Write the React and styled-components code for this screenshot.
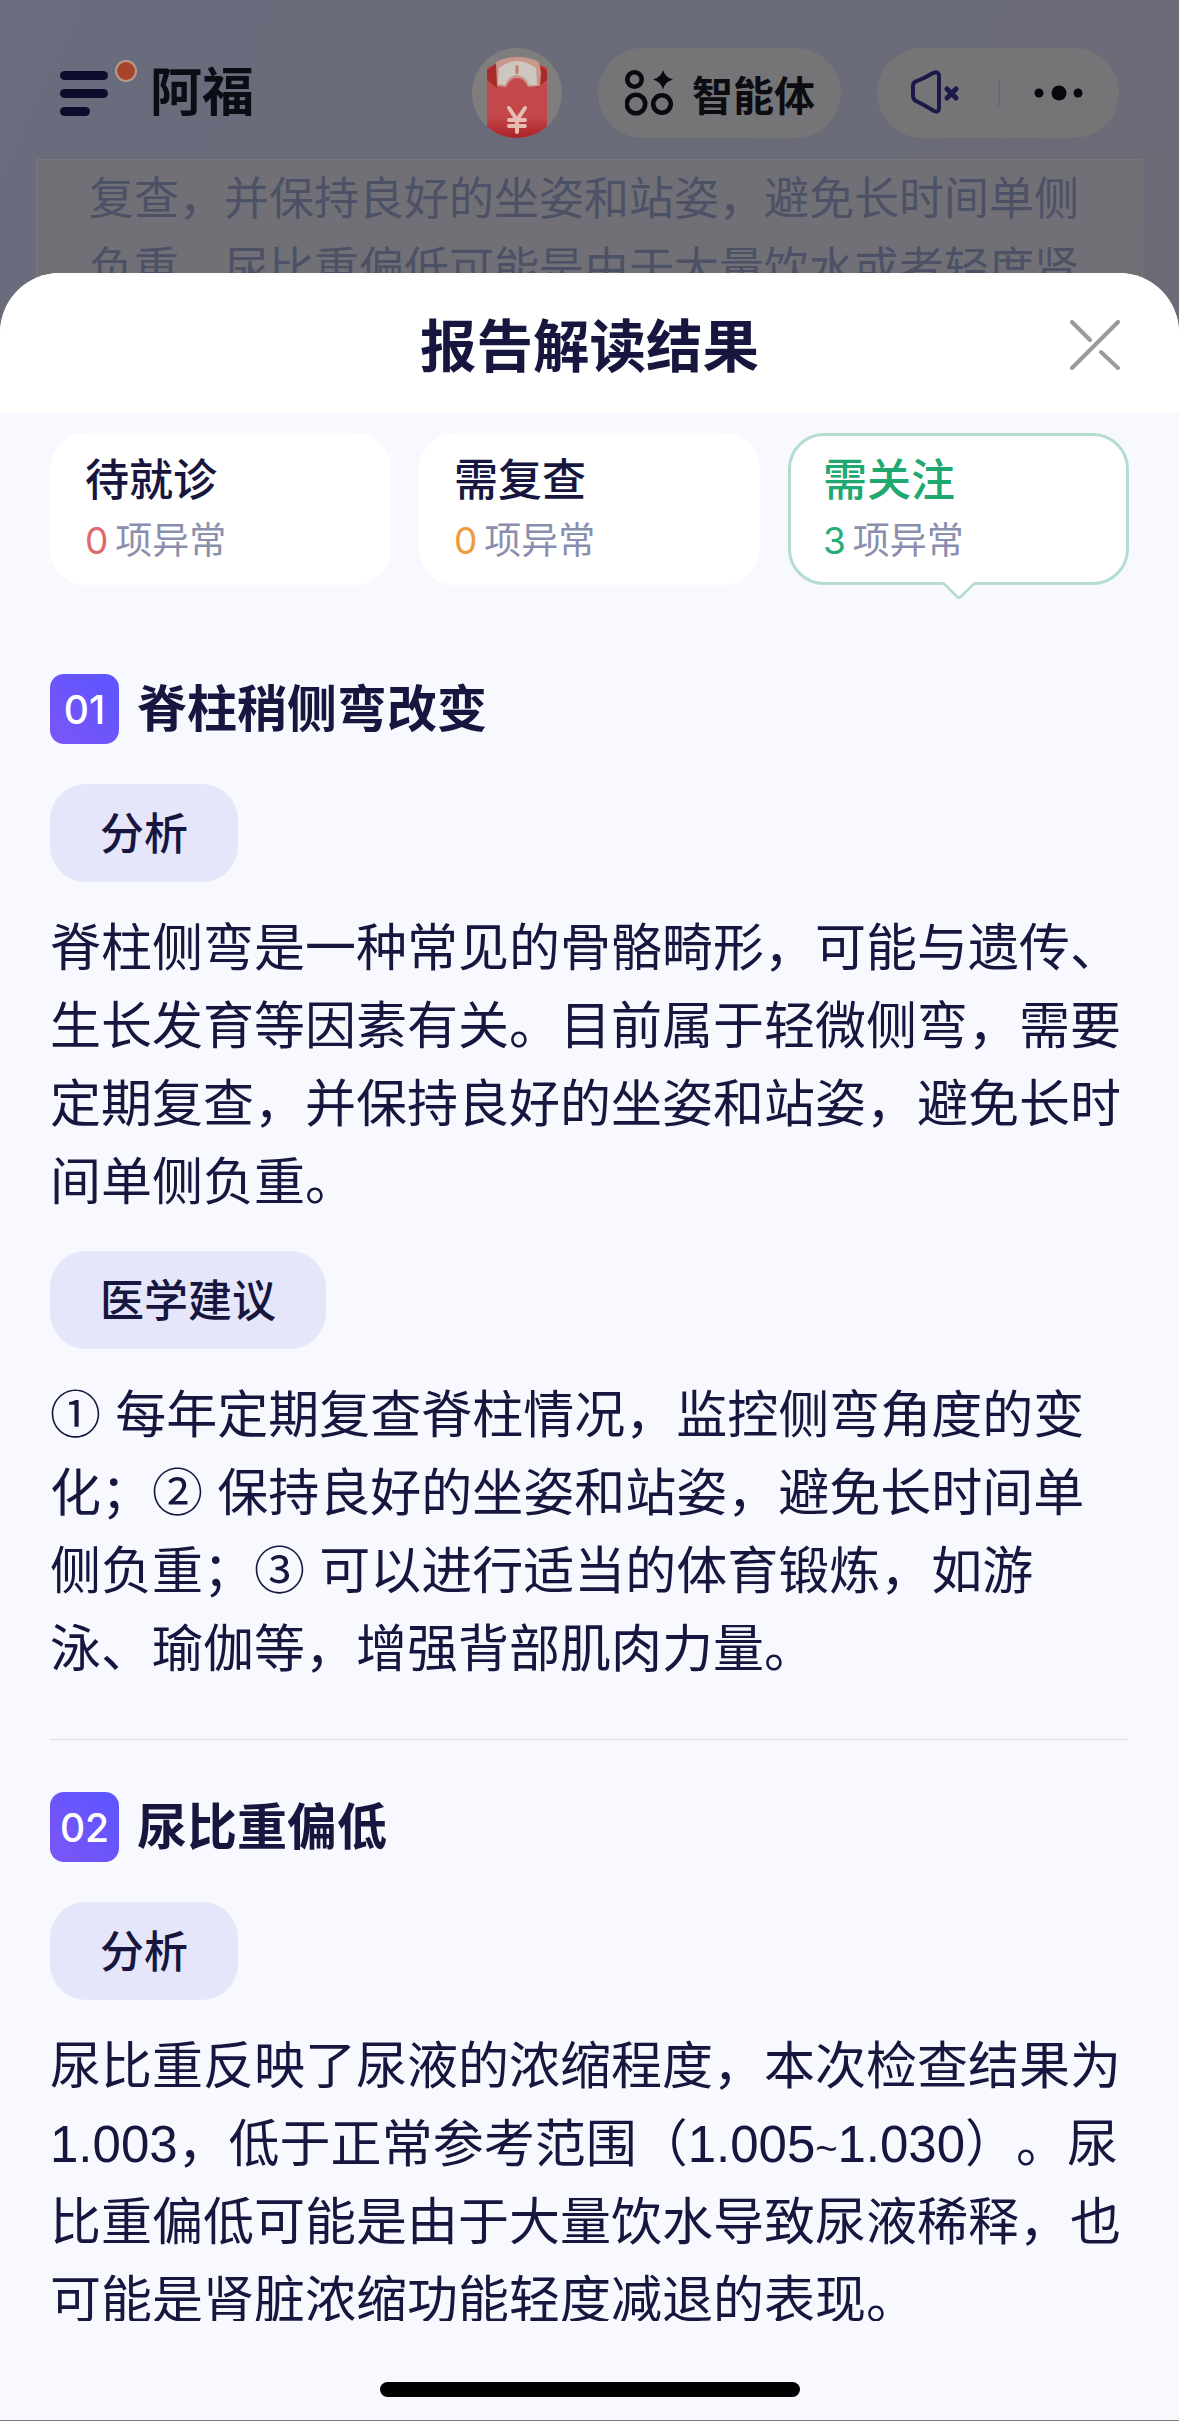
import React from 'react';
import styled, { createGlobalStyle } from 'styled-components';

const Global = createGlobalStyle`
  html, body { margin: 0; padding: 0; }
  body {
    background: #f8f9ff;
    font-family: Inter, "Noto Sans CJK SC", "Noto Sans", sans-serif;
  }
`;

const Page = styled.div`
  position: relative;
  width: 1179px;
  height: 2421px;
  overflow: hidden;
  background: linear-gradient(115deg, #686c7c 0%, #6b6b78 45%, #72696e 100%);
`;

const TopBar = styled.div`
  display: flex;
  align-items: center;
  justify-content: space-between;
  padding: 48px 60px 0;
`;

const Brand = styled.div`
  display: flex;
  align-items: center;
  gap: 12px;
`;

const BrandName = styled.span`
  font-size: 52px;
  font-weight: 700;
  line-height: 90px;
  color: #0c0c14;
`;

const TopActions = styled.div`
  display: flex;
  align-items: center;
  gap: 36px;
`;

const Avatar = styled.div`
  width: 90px;
  height: 90px;
  border-radius: 50%;
  overflow: hidden;
  background: #7f7e7c;
`;

const GhostPill = styled.div`
  display: flex;
  align-items: center;
  height: 90px;
  width: ${p => p.$width}px;
  box-sizing: border-box;
  padding-left: ${p => p.$inset}px;
  gap: ${p => p.$gap}px;
  border-radius: 45px;
  background: #757577;
`;

const AgentLabel = styled.span`
  font-size: 41px;
  font-weight: 600;
  color: #0c0c12;
`;

const PillDivider = styled.span`
  width: 2px;
  height: 26px;
  margin: 0 34px 0 37px;
  background: #68687a;
`;

const BehindCard = styled.div`
  margin: 21px 36px 0 36px;
  padding: 4px 52px 0;
  border: 1px solid #77777c;
  background: #707076;
  color: #4c5166;
  font-size: 45px;
  line-height: 70px;
  white-space: nowrap;
`;

const Sheet = styled.div`
  position: absolute;
  top: 273px;
  left: 0;
  right: 0;
  bottom: 0;
  display: flex;
  flex-direction: column;
  background: #f8f9ff;
  border-radius: 60px 60px 0 0;
  overflow: hidden;
  border-bottom: 1px solid #7c7c7c;
`;

const SheetHead = styled.div`
  display: flex;
  align-items: center;
  justify-content: center;
  position: relative;
  height: 140px;
  flex: none;
  background: #fff;
`;

const SheetTitle = styled.h1`
  margin: 0;
  padding-bottom: 3px;
  font-size: 56.5px;
  font-weight: 600;
  color: #16163f;
`;

const CloseButton = styled.button`
  position: absolute;
  top: 47px;
  right: 59px;
  width: 50px;
  height: 50px;
  padding: 0;
  border: 0;
  background: transparent;
`;

const Scroll = styled.div`
  height: 1908px;
  flex: none;
  overflow: hidden;
  padding: 20px 50px 0;
  box-sizing: border-box;
`;

const Tabs = styled.div`
  display: grid;
  grid-template-columns: repeat(3, 1fr);
  gap: 28px;
`;

const Tab = styled.div`
  position: relative;
  display: flex;
  flex-direction: column;
  justify-content: center;
  gap: 4px;
  height: 152px;
  box-sizing: border-box;
  padding: 0 32px;
  border: 3px solid ${p => (p.$active ? '#b5dcd0' : '#fff')};
  border-radius: 36px;
  background: #fff;

  ${p => p.$active && `
    &::after {
      content: '';
      position: absolute;
      left: 50%;
      bottom: -14px;
      width: 24px;
      height: 24px;
      margin-left: -12px;
      box-sizing: border-box;
      background: #fff;
      border-right: 3px solid #b5dcd0;
      border-bottom: 3px solid #b5dcd0;
      border-bottom-right-radius: 5px;
      transform: rotate(45deg);
    }
  `}
`;

const TabName = styled.div`
  font-size: 44px;
  font-weight: 500;
  line-height: 60px;
  color: ${p => p.$color};
`;

const TabCount = styled.div`
  font-size: 37px;
  line-height: 54px;
  color: #8a8fae;

  b {
    margin-right: 7px;
    font-weight: 400;
    color: ${p => p.$color};
  }
`;

const Section = styled.section`
  margin-top: ${p => (p.$first ? 89 : 0)}px;
`;

const SectionHead = styled.div`
  display: flex;
  align-items: center;
  gap: 18px;
  height: 70px;
  margin-bottom: 40px;
`;

const NumberBadge = styled.span`
  display: flex;
  align-items: center;
  justify-content: center;
  width: 69px;
  height: 70px;
  border-radius: 14px;
  background: linear-gradient(45deg, #7d55f8 0%, #5a55ff 100%);
  color: #fff;
  font-size: 39px;
  font-weight: 500;
`;

const SectionTitle = styled.h2`
  margin: 0;
  font-size: 50px;
  font-weight: 600;
  line-height: 70px;
  color: #16163f;
`;

const Label = styled.div`
  display: flex;
  align-items: center;
  width: fit-content;
  height: 98px;
  box-sizing: border-box;
  padding: 0 50px 4px;
  border-radius: 36px;
  background: #e5e6fa;
  font-size: 44px;
  font-weight: 500;
  color: #16163f;
`;

const Paragraph = styled.div`
  margin: 28px 0 29px;
  font-family: "Liberation Sans", "Noto Sans CJK SC", sans-serif;
  font-size: 51px;
  line-height: 78px;
  color: #16163f;
  text-spacing-trim: space-all;
`;

const Line = styled.div`
  height: 78px;
  white-space: nowrap;
`;

const Tilde = styled.span`
  font-size: 38px;
`;

const Divider = styled.hr`
  margin: 50px 0 52px;
  border: 0;
  border-top: 1px solid #dcdde6;
`;

const HomeBar = styled.div`
  display: flex;
  justify-content: center;
  padding-top: 61px;

  &::before {
    content: '';
    width: 420px;
    height: 15px;
    border-radius: 8px;
    background: #000;
  }
`;

const tabs = [
  { name: '待就诊', count: 0, nameColor: '#16163f', countColor: '#e0696c' },
  { name: '需复查', count: 0, nameColor: '#16163f', countColor: '#ec9b3e' },
  { name: '需关注', count: 3, nameColor: '#20a871', countColor: '#27ae78', active: true },
];

const sections = [
  {
    no: '01',
    title: '脊柱稍侧弯改变',
    blocks: [
      {
        label: '分析',
        lines: [
          '脊柱侧弯是一种常见的骨骼畸形，可能与遗传、',
          '生长发育等因素有关。目前属于轻微侧弯，需要',
          '定期复查，并保持良好的坐姿和站姿，避免长时',
          '间单侧负重。',
        ],
      },
      {
        label: '医学建议',
        lines: [
          '① 每年定期复查脊柱情况，监控侧弯角度的变',
          '化；② 保持良好的坐姿和站姿，避免长时间单',
          '侧负重；③ 可以进行适当的体育锻炼，如游',
          '泳、瑜伽等，增强背部肌肉力量。',
        ],
      },
    ],
  },
  {
    no: '02',
    title: '尿比重偏低',
    blocks: [
      {
        label: '分析',
        lines: [
          '尿比重反映了尿液的浓缩程度，本次检查结果为',
          '1.003，低于正常参考范围（1.005~1.030）。尿',
          '比重偏低可能是由于大量饮水导致尿液稀释，也',
          '可能是肾脏浓缩功能轻度减退的表现。',
        ],
      },
    ],
  },
];

// the tilde is much narrower in the reference than in Liberation Sans
function renderLine(text) {
  return text.split(/(~)/).map((part, i) =>
    part === '~' ? <Tilde key={i}>{part}</Tilde> : part
  );
}

function LogoMark() {
  return (
    <svg width="78" height="70" viewBox="0 0 78 70">
      <circle cx="66" cy="13" r="11" fill="#b79a8c" />
      <circle cx="66" cy="13" r="9" fill="#a8442c" />
      <rect x="0" y="13" width="48" height="9" rx="4.5" fill="#0e0c2c" />
      <rect x="0" y="31" width="48" height="9" rx="4.5" fill="#0e0c2c" />
      <rect x="0" y="49" width="30" height="9" rx="4.5" fill="#0e0c2c" />
    </svg>
  );
}

function RedPacket() {
  return (
    <svg width="90" height="90" viewBox="0 0 90 90">
      <defs>
        <linearGradient id="packet" x1="0" y1="0" x2="0" y2="1">
          <stop offset="0" stopColor="#c44a4c" />
          <stop offset="0.7" stopColor="#c4474a" />
          <stop offset="1" stopColor="#ab2228" />
        </linearGradient>
      </defs>
      <path d="M15 22 Q15 19 18 18 L72 18 Q75 19 75 22 L75 90 L15 90 Z" fill="url(#packet)" />
      <path d="M15 22 L25 15 L25 40 L15 32 Z" fill="#a82a2a" />
      <path d="M75 22 L65 15 L65 40 L75 32 Z" fill="#a82a2a" />
      <path d="M24 14 Q32 9 45 9 Q58 9 67 14 L69 24 L68 38 L56 39 Q52 30 45 30 Q38 30 34 39 L25 38 Z" fill="#c9988c" />
      <path d="M27 20 Q36 13 45 13 Q54 13 64 20 L65 37 L57 37 Q53 27 45 27 Q37 27 33 37 L26 36 Z" fill="#cfc6c0" />
      <rect x="43.5" y="17" width="3" height="9" rx="1.5" fill="#c27a6c" />
      <path d="M37 60 L45 72 L53 60 M45 72 L45 84 M37 72 L53 72 M37 78 L53 78" fill="none" stroke="#e4bdb4" strokeWidth="4" strokeLinecap="round" />
    </svg>
  );
}

function AgentIcon() {
  return (
    <svg width="48" height="46" viewBox="0 0 48 46" fill="none" stroke="#0a0a0e" strokeWidth="4.6">
      <circle cx="9.5" cy="9.5" r="7.2" />
      <circle cx="11" cy="34" r="9.2" />
      <circle cx="37" cy="34" r="8.8" />
      <path d="M38 0 Q40 7.5 48 9.5 Q40 11.5 38 19.5 Q36 11.5 28 9.5 Q36 7.5 38 0 Z" fill="#0a0a0e" stroke="none" />
    </svg>
  );
}

function MutedIcon() {
  return (
    <svg width="50" height="46" viewBox="0 0 50 46" fill="none" stroke="#1b1a4a" strokeLinecap="round" strokeLinejoin="round">
      <path d="M2 16 Q2 12 6 11 Q14 8 22 3 Q27 1 28 5 L28 38 Q28 43 23 41 Q15 36 7 32 Q2 30 2 26 Z" strokeWidth="4" />
      <path d="M36 19 L45 28 M45 19 L36 28" strokeWidth="5" />
    </svg>
  );
}

function MoreIcon() {
  return (
    <svg width="50" height="16" viewBox="0 0 50 16" fill="#08080c">
      <circle cx="5" cy="8" r="4.5" />
      <circle cx="25" cy="8" r="7.5" />
      <circle cx="44" cy="8" r="4.5" />
    </svg>
  );
}

function CloseIcon() {
  return (
    <svg width="50" height="50" viewBox="0 0 50 50" fill="none" stroke="#9a9a9a" strokeWidth="4" strokeLinecap="round">
      <path d="M48 2 L2 48" />
      <path d="M2 2 L20 20" />
      <path d="M31 32 L48 48" />
    </svg>
  );
}

export default function App() {
  return (
    <>
      <Global />
      <Page>
        <TopBar>
          <Brand>
            <LogoMark />
            <BrandName>阿福</BrandName>
          </Brand>
          <TopActions>
            <Avatar><RedPacket /></Avatar>
            <GhostPill $width={243} $inset={27} $gap={19}>
              <AgentIcon />
              <AgentLabel>智能体</AgentLabel>
            </GhostPill>
            <GhostPill $width={242} $inset={34} $gap={0}>
              <MutedIcon />
              <PillDivider />
              <MoreIcon />
            </GhostPill>
          </TopActions>
        </TopBar>

        <BehindCard>
          <div>复查，并保持良好的坐姿和站姿，避免长时间单侧</div>
          <div>负重，尿比重偏低可能是由于大量饮水或者轻度肾</div>
        </BehindCard>

        <Sheet>
          <SheetHead>
            <SheetTitle>报告解读结果</SheetTitle>
            <CloseButton aria-label="关闭"><CloseIcon /></CloseButton>
          </SheetHead>

          <Scroll>
            <Tabs>
              {tabs.map(t => (
                <Tab key={t.name} $active={t.active}>
                  <TabName $color={t.nameColor}>{t.name}</TabName>
                  <TabCount $color={t.countColor}><b>{t.count}</b>项异常</TabCount>
                </Tab>
              ))}
            </Tabs>

            {sections.map((s, i) => (
              <Section key={s.no} $first={i === 0}>
                <SectionHead>
                  <NumberBadge>{s.no}</NumberBadge>
                  <SectionTitle>{s.title}</SectionTitle>
                </SectionHead>
                {s.blocks.map(b => (
                  <div key={b.label}>
                    <Label>{b.label}</Label>
                    <Paragraph>
                      {b.lines.map(l => <Line key={l}>{renderLine(l)}</Line>)}
                    </Paragraph>
                  </div>
                ))}
                {i < sections.length - 1 && <Divider />}
              </Section>
            ))}
          </Scroll>

          <HomeBar />
        </Sheet>
      </Page>
    </>
  );
}
